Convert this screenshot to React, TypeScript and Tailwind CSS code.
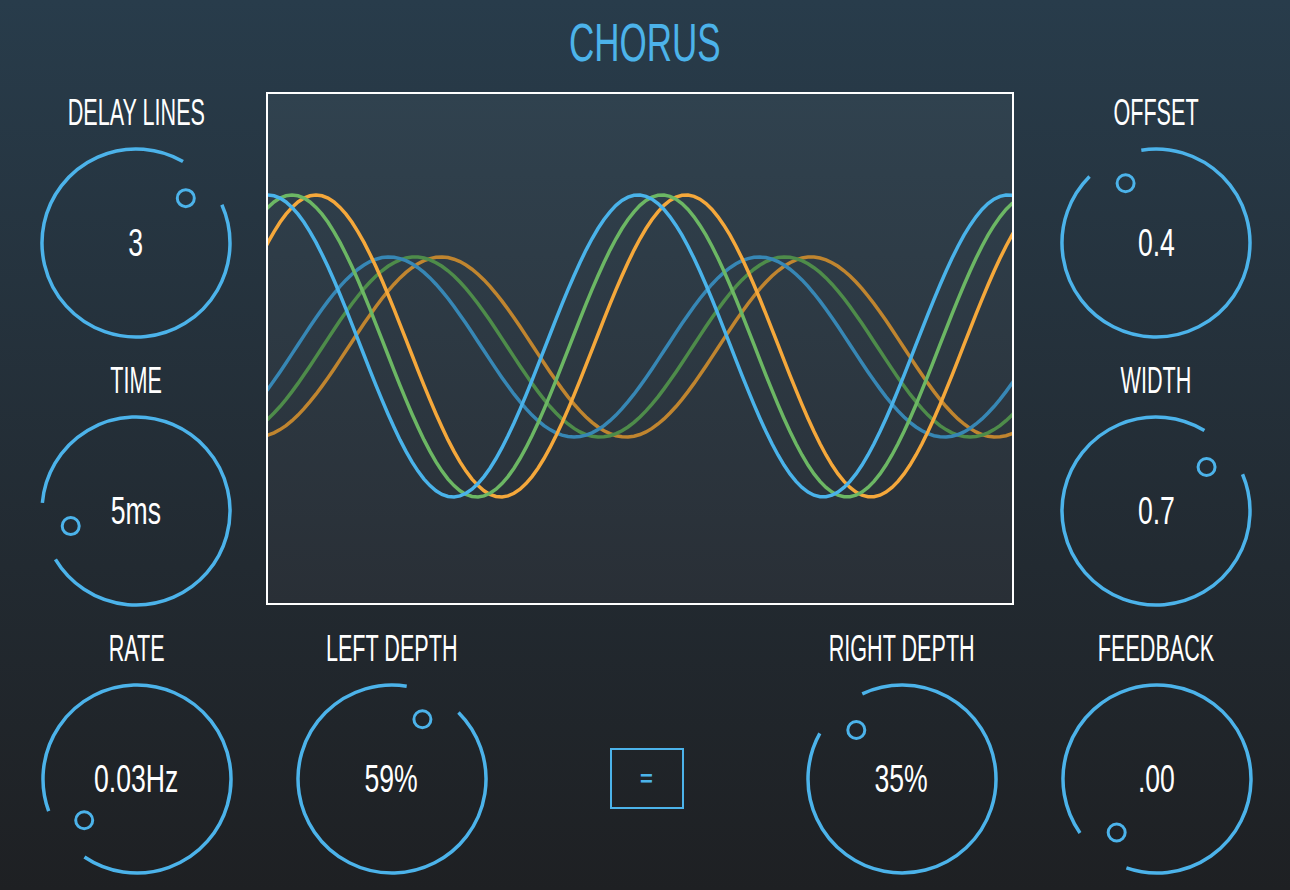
const BLUE = '#4cb3ea'

interface KnobProps {
  label: string
  value: string
  angle: number
}

function ringPath(angle: number) {
  const r = 94
  const c = 100
  const gap = 18
  const s = ((angle + gap) * Math.PI) / 180
  const e = ((angle - gap + 360) * Math.PI) / 180
  const x1 = c + r * Math.sin(s)
  const y1 = c - r * Math.cos(s)
  const x2 = c + r * Math.sin(e)
  const y2 = c - r * Math.cos(e)
  return `M ${x1.toFixed(2)} ${y1.toFixed(2)} A ${r} ${r} 0 1 1 ${x2.toFixed(2)} ${y2.toFixed(2)}`
}

function Knob({ label, value, angle }: KnobProps) {
  const a = (angle * Math.PI) / 180
  const dx = 100 + 67 * Math.sin(a)
  const dy = 100 - 67 * Math.cos(a)
  return (
    <div className="flex flex-col items-center h-[268px]">
      <div className="h-[50px] flex items-center justify-center">
        <span className="block text-[36px] leading-none text-white whitespace-nowrap scale-x-[0.6]">{label}</span>
      </div>
      <div className="grid mt-[5px] w-[200px] h-[200px]">
        <svg width="200" height="200" viewBox="0 0 200 200" className="[grid-area:1/1]">
          <path d={ringPath(angle)} fill="none" stroke={BLUE} strokeWidth="3.5" />
          <circle cx={dx} cy={dy} r="8.5" fill="none" stroke={BLUE} strokeWidth="3" />
        </svg>
        <div className="[grid-area:1/1] flex items-center justify-center">
          <span className="block text-[38px] leading-none text-white whitespace-nowrap scale-x-[0.7]">{value}</span>
        </div>
      </div>
    </div>
  )
}

function wave(peak: number, amp: number, cy: number) {
  const pts: string[] = []
  for (let x = 262; x <= 1018; x += 6) {
    const y = cy - amp * Math.cos((2 * Math.PI * (x - peak)) / 370)
    pts.push(`${x},${y.toFixed(1)}`)
  }
  return pts.join(' ')
}

function Scope() {
  return (
    <div className="-ml-[6px] w-[748px] h-[513px] border-2 border-white bg-gradient-to-b from-[#30424f] to-[#292f36]">
      <svg width="744" height="509" viewBox="268 94 744 509" className="block">
        <polyline points={wave(441, 90, 347)} fill="none" stroke="#c0852f" strokeWidth="3.5" />
        <polyline points={wave(415, 90, 347)} fill="none" stroke="#4e8c4a" strokeWidth="3.5" />
        <polyline points={wave(389, 90, 347)} fill="none" stroke="#3787b5" strokeWidth="3.5" />
        <polyline points={wave(316, 151, 346)} fill="none" stroke="#f5a83b" strokeWidth="3.5" />
        <polyline points={wave(292, 151, 346)} fill="none" stroke="#6cb764" strokeWidth="3.5" />
        <polyline points={wave(268, 151, 346)} fill="none" stroke="#4ab3ea" strokeWidth="3.5" />
      </svg>
    </div>
  )
}

export default function App() {
  return (
    <div className="w-full h-[890px] overflow-hidden bg-gradient-to-b from-[#283c4b] to-[#1e2023] font-['Liberation_Sans',sans-serif]">
      {/* title */}
      <div className="h-[88px] flex items-center justify-center pb-[3px]">
        <span className="block text-[53px] leading-none text-[#4cb3ea] scale-x-[0.66]">CHORUS</span>
      </div>

      <div className="flex">
        <div className="w-[272px] flex flex-col">
          <Knob label="DELAY LINES" value="3" angle={48} />
          <Knob label="TIME" value="5ms" angle={-103} />
        </div>
        <div className="w-[750px] pt-[4px]">
          <Scope />
        </div>
        <div className="w-[268px] flex flex-col">
          <Knob label="OFFSET" value="0.4" angle={-27} />
          <Knob label="WIDTH" value="0.7" angle={49} />
        </div>
      </div>

      <div className="flex pl-[9px]">
        <div className="w-[255px]">
          <Knob label="RATE" value="0.03Hz" angle={-128} />
        </div>
        <div className="w-[255px]">
          <Knob label="LEFT DEPTH" value="59%" angle={27} />
        </div>
        <div className="w-[255px] flex justify-center pt-[124px]">
          <button className="w-[74px] h-[61px] border-2 border-[#4cb3ea] flex items-center justify-center text-[22px] font-bold text-[#4cb3ea]">
            =
          </button>
        </div>
        <div className="w-[255px]">
          <Knob label="RIGHT DEPTH" value="35%" angle={-43} />
        </div>
        <div className="w-[255px]">
          <Knob label="FEEDBACK" value=".00" angle={-143} />
        </div>
      </div>
    </div>
  )
}
